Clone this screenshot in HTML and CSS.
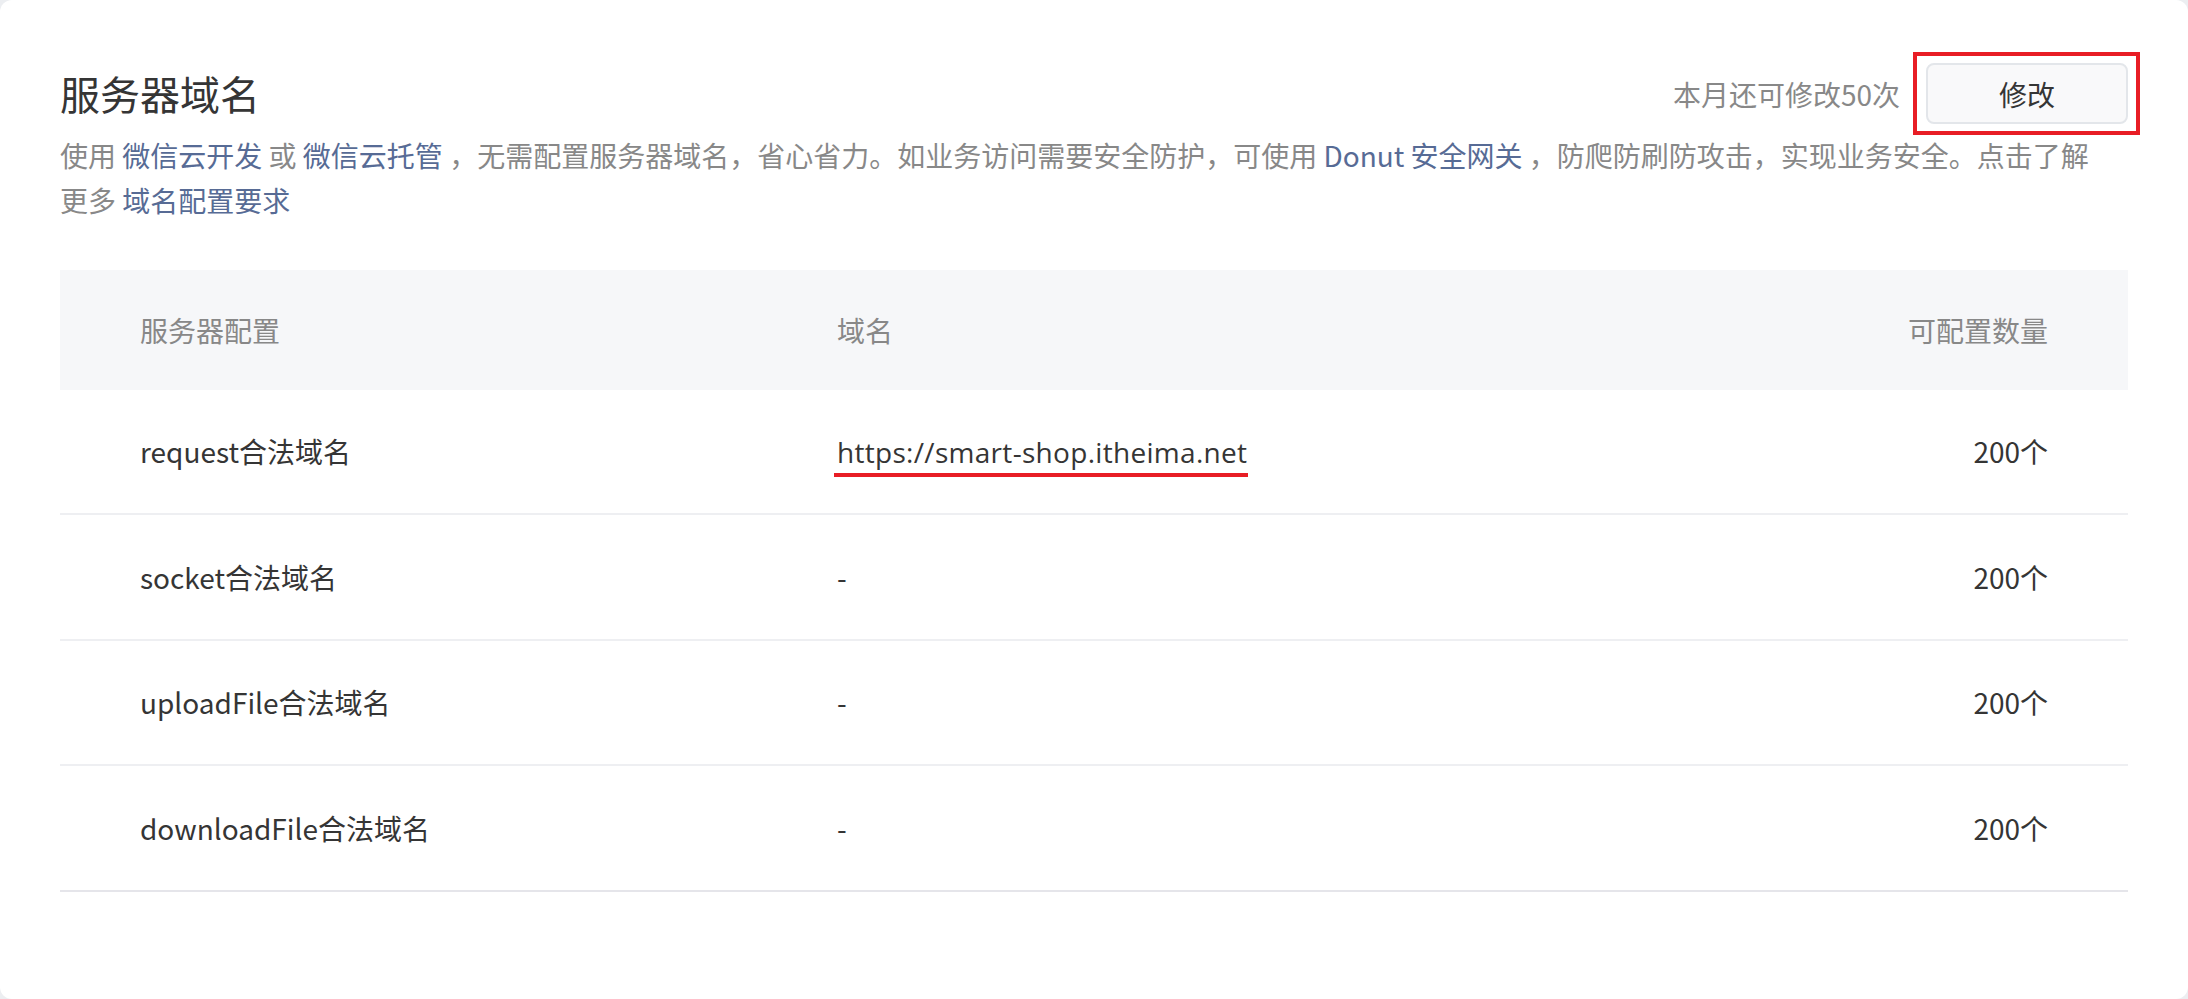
FILE: index.html
```html
<!DOCTYPE html>
<html lang="zh-CN">
<head>
<meta charset="utf-8">
<title>服务器域名</title>
<link rel="stylesheet" href="styles.css">
</head>
<body>
<main class="card">
  <div class="head">
    <h2 class="title">服务器域名</h2>
    <div class="actions">
      <span class="quota">本月还可修改50次</span>
      <span class="btn-wrap">
        <button class="btn" type="button">修改</button>
        <span class="mark-box"></span>
      </span>
    </div>
  </div>
  <p class="desc">使用 <a class="link">微信云开发</a> 或 <a class="link">微信云托管</a> ，无需配置服务器域名，省心省力。如业务访问需要安全防护，可使用 <a class="link">Donut 安全网关</a> ，防爬防刷防攻击，实现业务安全。点击了解更多 <a class="link">域名配置要求</a></p>
  <div class="table">
    <div class="row th">
      <div class="cell">服务器配置</div>
      <div class="cell">域名</div>
      <div class="cell num">可配置数量</div>
    </div>
    <div class="row">
      <div class="cell">request合法域名</div>
      <div class="cell"><span class="url">https://smart-shop.itheima.net</span></div>
      <div class="cell num">200个</div>
    </div>
    <div class="row">
      <div class="cell">socket合法域名</div>
      <div class="cell">-</div>
      <div class="cell num">200个</div>
    </div>
    <div class="row">
      <div class="cell">uploadFile合法域名</div>
      <div class="cell">-</div>
      <div class="cell num">200个</div>
    </div>
    <div class="row last">
      <div class="cell">downloadFile合法域名</div>
      <div class="cell">-</div>
      <div class="cell num">200个</div>
    </div>
  </div>
</main>
</body>
</html>
```
FILE: styles.css
```css
* { box-sizing: border-box; }
html, body { margin: 0; padding: 0; }
body {
  background: #eceef1;
  font-family: "Noto Sans CJK SC", "Noto Sans", sans-serif;
  color: #353535;
}
.card {
  background: #ffffff;
  border-radius: 12px;
  height: 999px;
  padding: 63px 60px 0 60px;
  overflow: hidden;
}
.head {
  display: flex;
  align-items: center;
  justify-content: space-between;
  height: 61px;
}
.title {
  margin: 0;
  font-size: 40px;
  font-weight: 400;
  line-height: 61px;
  color: #353535;
}
.actions {
  display: flex;
  align-items: center;
  gap: 26px;
}
.quota {
  font-size: 28px;
  color: #888888;
  line-height: 40px;
}
.btn-wrap {
  position: relative;
  display: inline-flex;
}
.btn {
  width: 202px;
  height: 61px;
  border: 2px solid #e3e6ea;
  border-radius: 8px;
  background: #f9f9fa;
  font-family: inherit;
  font-size: 28px;
  color: #353535;
  padding: 0;
  line-height: 1;
}
.mark-box {
  position: absolute;
  top: -11px;
  bottom: -11px;
  left: -13px;
  right: -12px;
  border: 4px solid #e81d25;
  pointer-events: none;
}
.desc {
  margin: 9px 0 0 0;
  padding-right: 24px;
  font-size: 28px;
  line-height: 44.8px;
  color: #888888;
}
.link {
  color: #576b95;
  text-decoration: none;
}
.table {
  margin-top: 47px;
}
.row {
  display: grid;
  grid-template-columns: 697px 1fr 400px;
  align-items: center;
  height: 125.5px;
  border-bottom: 2px solid #eeeff2;
  font-size: 28px;
  color: #353535;
}
.row.last { border-bottom-color: #e5e5ea; }
.row.th {
  height: 120px;
  background: #f6f7f9;
  border-bottom: none;
  color: #888888;
}
.cell {
  padding: 0 80px;
  white-space: nowrap;
}
.cell.num { text-align: right; }
.url {
  position: relative;
  display: inline-block;
  font-family: "Open Sans", "Noto Sans", sans-serif;
  font-size: 28px;
  line-height: 40px;
  letter-spacing: 0.3px;
  color: #353535;
}
.url::after {
  content: "";
  position: absolute;
  left: -3px;
  right: -1px;
  bottom: -5px;
  height: 4px;
  background: #e81d25;
}
```
